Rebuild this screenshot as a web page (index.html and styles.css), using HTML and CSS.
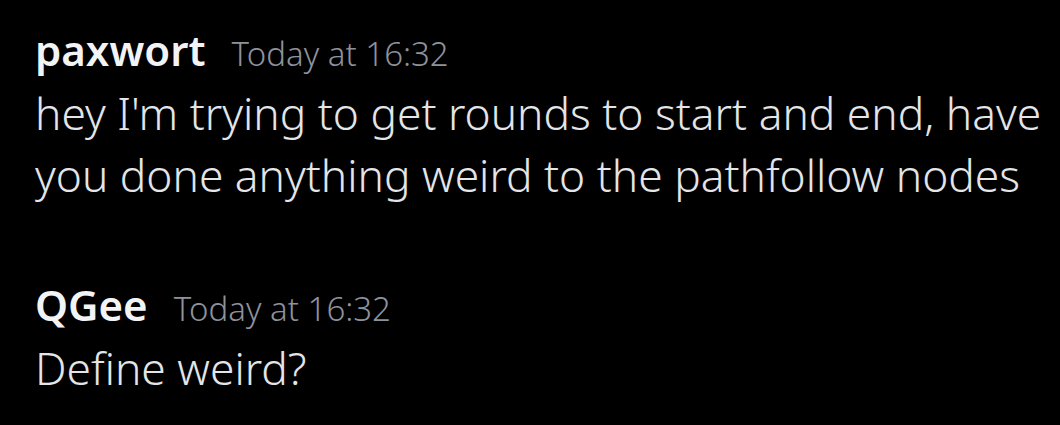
FILE: index.html
```html
<!DOCTYPE html>
<html lang="en">
<head>
    <meta charset="UTF-8">
    <title>Chat</title>
    <link rel="stylesheet" href="styles.css">
</head>
<body>

    <div class="chat">
        <div class="message">
            <div class="header">
                <span class="username">paxwort</span>
                <span class="timestamp">Today at 16:32</span>
            </div>
            <div class="content">hey I'm trying to get rounds to start and end, have you done anything weird to the pathfollow nodes</div>
        </div>

        <div class="message">
            <div class="header">
                <span class="username">QGee</span>
                <span class="timestamp">Today at 16:32</span>
            </div>
            <div class="content">Define weird?</div>
        </div>
    </div>

</body>
</html>
```

FILE: styles.css
```css
body {
    margin: 0;
    padding: 0;
    background-color: #000;
    font-family: "Noto Sans", sans-serif;
}

.chat {
    display: flex;
    flex-direction: column;
    gap: 68px;
    padding: 19px 10px 0 35px;
}

.header {
    line-height: 62px;
}

.username {
    color: #f2f3f5;
    font-size: 42px;
    font-weight: 600;
    margin-right: 22px;
}

.timestamp {
    color: #8e929c;
    font-size: 33px;
    font-weight: 300;
}

.content {
    color: #e3e5e8;
    font-size: 44.3px;
    font-weight: 300;
    line-height: 62px;
    margin-top: -9px;
}
```
